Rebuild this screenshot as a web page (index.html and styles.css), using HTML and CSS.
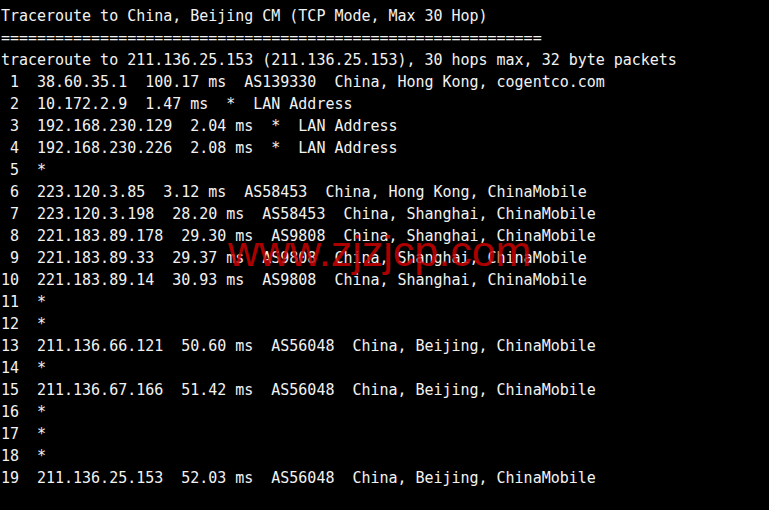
FILE: index.html
```html
<!DOCTYPE html>
<html>
<head>
<meta charset="utf-8">
<link rel="stylesheet" href="styles.css">
</head>
<body>
<div class="term">
<pre class="out">Traceroute to China, Beijing CM (TCP Mode, Max 30 Hop)
============================================================
traceroute to 211.136.25.153 (211.136.25.153), 30 hops max, 32 byte packets
 1  38.60.35.1  100.17 ms  AS139330  China, Hong Kong, cogentco.com
 2  10.172.2.9  1.47 ms  *  LAN Address
 3  192.168.230.129  2.04 ms  *  LAN Address
 4  192.168.230.226  2.08 ms  *  LAN Address
 5  *
 6  223.120.3.85  3.12 ms  AS58453  China, Hong Kong, ChinaMobile
 7  223.120.3.198  28.20 ms  AS58453  China, Shanghai, ChinaMobile
 8  221.183.89.178  29.30 ms  AS9808  China, Shanghai, ChinaMobile
 9  221.183.89.33  29.37 ms  AS9808  China, Shanghai, ChinaMobile
10  221.183.89.14  30.93 ms  AS9808  China, Shanghai, ChinaMobile
11  *
12  *
13  211.136.66.121  50.60 ms  AS56048  China, Beijing, ChinaMobile
14  *
15  211.136.67.166  51.42 ms  AS56048  China, Beijing, ChinaMobile
16  *
17  *
18  *
19  211.136.25.153  52.03 ms  AS56048  China, Beijing, ChinaMobile</pre>
<div class="watermark">www.zjzjcp.com</div>
</div>
</body>
</html>
```
FILE: styles.css
```css
html, body {
  margin: 0;
  padding: 0;
  background: #000;
}
.term {
  position: relative;
  width: 769px;
  height: 510px;
  background: #000;
  overflow: hidden;
}
.out {
  margin: 0;
  padding: 5px 0 0 1px;
  font-family: "DejaVu Sans Mono", "Liberation Mono", monospace;
  font-size: 15px;
  letter-spacing: -0.02px;
  line-height: 22px;
  color: #f2f2f2;
}
.watermark {
  position: absolute;
  left: 228px;
  top: 226px;
  font-family: "Liberation Sans", Arial, sans-serif;
  font-size: 43px;
  line-height: 50px;
  color: rgba(204, 0, 0, 0.85);
  white-space: nowrap;
}
```
